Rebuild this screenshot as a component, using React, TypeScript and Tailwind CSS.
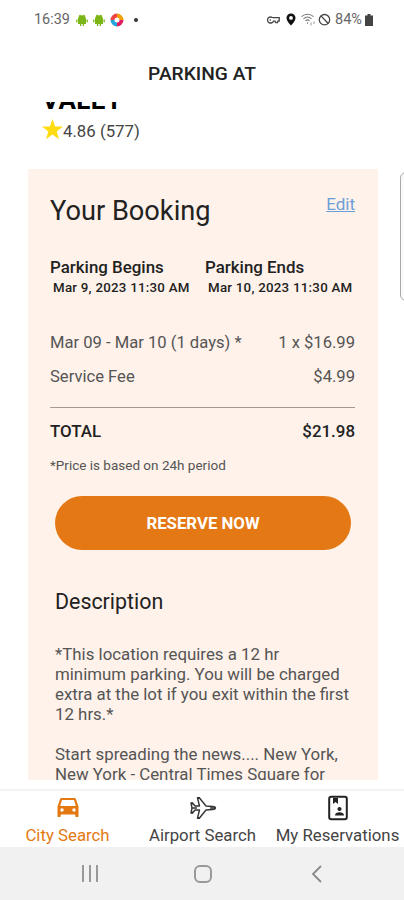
import React, { useState } from "react";

type Tab = "city" | "airport" | "reservations";

const AndroidIcon: React.FC = () => (
  <svg width="12" height="13" viewBox="0 0 12 13" fill="#7cb518">
    <path d="M2 5.2a4 4 0 0 1 8 0zM2 5.2h8V10H2z" />
    <path d="M3.5 1l1 1.4M8.5 1l-1 1.4M.8 5.5v2.7M11.2 5.5v2.7M4.6 10v2M7.4 10v2" stroke="#7cb518" strokeWidth="1.3" />
  </svg>
);

const SwirlIcon: React.FC = () => (
  <svg width="14" height="14" viewBox="0 0 14 14" fill="none" strokeWidth="4">
    <path d="M7 2.5A4.5 4.5 0 0 1 11.5 7" stroke="#f59e0b" />
    <path d="M11.5 7A4.5 4.5 0 0 1 7 11.5" stroke="#e11d62" />
    <path d="M7 11.5A4.5 4.5 0 0 1 2.5 7" stroke="#22a7dc" />
    <path d="M2.5 7A4.5 4.5 0 0 1 7 2.5" stroke="#ef4444" />
  </svg>
);

const StatusIcons: React.FC = () => (
  <svg width="67" height="16" viewBox="0 0 67 16" fill="none" stroke="#444">
    <path d="M6 5.4a3 3 0 1 0 0 5.2c.8-.4 1.2-1 1.5-1.4h1.5l.8 1.5h1.6l.5-1.5h1.3V5.7H7.5A3 3 0 0 0 6 5.4z" strokeWidth="1.3" />
    <circle cx="4.3" cy="8" r=".8" fill="#444" stroke="none" />
    <path d="M25 1.5A4.5 4.5 0 0 0 20.500 6C20.500 9 25 13.500 25 13.500S29.500 9 29.500 6A4.500 4.500 0 0 0 25 1.500zm0 2.500a1.900 1.900 0 1 1 0 3.800 1.900 1.900 0 0 1 0-3.800z" fill="#111" stroke="none" />
    <path d="M35.5 4.700c3.500-3.200 8.500-3.200 12 0M37.500 6.800c2.500-2.200 5.500-2.200 8 0M39.500 8.700c1.300-1 2.700-1 4 0" stroke="#777" strokeWidth="1.1" />
    <path d="M41.5 10v2M45 10.500v3M48 9.500v2.500" stroke="#999" />
    <circle cx="58.5" cy="7.700" r="5.200" strokeWidth="1.3" />
    <path d="M55 3.900l7.200 7.600" strokeWidth="1.3" />
  </svg>
);

const CarIcon: React.FC = () => (
  <svg width="24" height="22" viewBox="0 0 24 22" fill="#e47911">
    <path
      fillRule="evenodd"
      d="M5.5 1h13c.7 0 1.2.4 1.4 1L22.5 9.5V19c0 .6-.4 1-1 1h-1.2c-.6 0-1-.4-1-1v-1.5H4.7V19c0 .6-.4 1-1 1H2.5c-.6 0-1-.4-1-1V9.5L4.1 2c.2-.6.7-1 1.4-1zM6 3L4.2 9h15.6L18 3zM6 11.3a1.7 1.7 0 1 0 0 3.4 1.7 1.7 0 0 0 0-3.4zm12 0a1.7 1.7 0 1 0 0 3.4 1.7 1.7 0 0 0 0-3.4z"
    />
  </svg>
);

const PlaneIcon: React.FC = () => (
  <svg width="28" height="26" viewBox="0 0 28 26" fill="none" stroke="#333" strokeWidth="1.4" strokeLinejoin="round">
    <path d="M10.5 11L8.5 3h2l6.500 8 6.500.5c1.500.1 3 .6 3 1.500s-1.500 1.400-3 1.500L17 15l-6.500 8h-2l2-8H6l-2.500 3H2l1-5-1-5h1.500L6 11z" />
    <path d="M3 13h5M21 13h5" />
    <path d="M8 3h3M8 23h3M2 8.5h2M2 17.5h2" strokeWidth="2.2" />
  </svg>
);

const ReservationIcon: React.FC = () => (
  <svg width="20" height="26" viewBox="0 0 20 26">
    <rect x="1.2" y="1.8" width="17.6" height="22.4" rx="2" fill="none" stroke="#222" strokeWidth="2" />
    <path d="M5 3v6l2.5-2L10 9V3z" fill="#222" />
    <circle cx="11.5" cy="14" r="2.1" fill="#222" />
    <path d="M7 20.5c0-2.500 2-3.200 4.500-3.200s4.500.7 4.500 3.200z" fill="#222" />
  </svg>
);

const StatusBar: React.FC = () => (
  <div className="h-10 pl-[34px] pr-[31px] flex items-center text-sm text-[#666]">
    <span className="w-9 whitespace-nowrap text-[14.4px]">16:39</span>
    <div className="ml-1.5 flex items-center gap-[5px]">
      <AndroidIcon />
      <AndroidIcon />
      <SwirlIcon />
    </div>
    <span className="ml-2.5 size-1 rounded-full bg-[#333]" />
    <div className="ml-auto flex items-center">
      <StatusIcons />
      <span className="ml-0.5 w-[30px] whitespace-nowrap text-[14.5px]">84%</span>
      <svg width="8" height="14" viewBox="0 0 8 14" fill="#444">
        <path d="M2.5 1h3v1.5H8V13H0V2.5h2.5z" />
      </svg>
    </div>
  </div>
);

const PriceRow: React.FC<{ label: string; price: string }> = ({ label, price }) => (
  <div className="flex justify-between h-[34px] text-[16.6px] leading-[25px] text-[#555]">
    <span>{label}</span>
    <span>{price}</span>
  </div>
);

const tabs: { id: Tab; label: string; icon: React.ReactNode }[] = [
  { id: "city", label: "City Search", icon: <CarIcon /> },
  { id: "airport", label: "Airport Search", icon: <PlaneIcon /> },
  { id: "reservations", label: "My Reservations", icon: <ReservationIcon /> },
];

const App: React.FC = () => {
  const [activeTab, setActiveTab] = useState<Tab>("city");

  return (
    <div className="h-[900px] w-[404px] bg-white flex flex-col overflow-hidden font-['Roboto',sans-serif] text-[#222]">
      <StatusBar />
      <div className="h-[62px] pt-[21px] text-center text-[19.2px] leading-[26px] font-medium">PARKING AT</div>

      <div className="relative h-[678px] overflow-hidden">
        <div className="h-[67px] pl-[42px]">
          <div className="h-[9px] overflow-hidden flex items-end">
            <span className="text-[26px] leading-[30px] -mb-[4px] font-bold text-black tracking-[0.4px]">VALET</span>
          </div>
          <div className="mt-[7px] flex items-center h-[23px] text-[#444]">
            <svg width="21" height="21" viewBox="0 0 24 24" fill="#ffdc12">
              <path d="M12 0l3 8.5 9 .2-7.2 5.5L19.5 23 12 17.8 4.5 23l2.7-8.8L0 8.7l9-.2z" />
            </svg>
            <span className="pt-1 text-[16.8px]">4.86 (577)</span>
          </div>
        </div>

        <div className="ml-7 w-[350px] h-[611px] bg-[#fff2ea] pl-[22px] pr-[23px] overflow-hidden">
          <div className="flex justify-between h-[86px] pt-6">
            <h1 className="text-[27.2px] leading-9">Your Booking</h1>
            <a href="#" className="text-[17px] leading-[22px] text-[#6c9fd9] underline">
              Edit
            </a>
          </div>

          <div className="flex h-[75px] font-medium">
            <div className="w-[155px] whitespace-nowrap">
              <div className="text-[16.9px] leading-6">Parking Begins</div>
              <div className="pl-[3px] pt-px text-[13.3px] leading-4 tracking-[0.25px]">Mar 9, 2023 11:30 AM</div>
            </div>
            <div className="whitespace-nowrap">
              <div className="text-[16.9px] leading-6">Parking Ends</div>
              <div className="pl-[3px] pt-px text-[13.3px] leading-4 tracking-[0.25px]">Mar 10, 2023 11:30 AM</div>
            </div>
          </div>

          <PriceRow label="Mar 09 - Mar 10 (1 days) *" price="1 x $16.99" />
          <PriceRow label="Service Fee" price="$4.99" />
          <div className="mt-[9px] border-t border-[#a19a95]" />
          <div className="pt-[11px] flex justify-between text-[16.9px] leading-6 font-medium">
            <span>TOTAL</span>
            <span>$21.98</span>
          </div>
          <div className="mt-3 h-[41px] text-[13.5px] leading-5 text-[#555]">*Price is based on 24h period</div>

          <div className="pl-[5px] pr-1">
            <button className="w-full h-[54px] pt-px rounded-full bg-[#e47814] text-white text-[16.8px] font-bold">
              RESERVE NOW
            </button>
            <h2 className="mt-[37px] text-[21.4px] leading-[30px]">Description</h2>
            <div className="mt-[27px] text-[16.85px] leading-5 text-[#555] whitespace-nowrap">
              <p>
                *This location requires a 12 hr
                <br />
                minimum parking. You will be charged
                <br />
                extra at the lot if you exit within the first
                <br />
                12 hrs.*
              </p>
              <p className="mt-5">
                Start spreading the news.... New York,
                <br />
                New York - Central Times Square for
              </p>
            </div>
          </div>
        </div>

        <div className="absolute right-[-8px] top-[70px] w-3 h-[129px] rounded-md border border-[#aaa] bg-[#fafafa]" />
      </div>

      <div className="mt-[9px] h-[58px] border-t-2 border-[#f4f4f4] flex">
        {tabs.map((tab) => (
          <button
            key={tab.id}
            onClick={() => setActiveTab(tab.id)}
            className={
              "flex flex-col items-center w-[135px] shrink-0 text-[16.8px] leading-5 whitespace-nowrap " +
              (activeTab === tab.id ? "text-[#e47911]" : "text-[#444]")
            }
          >
            <span className="h-[33px] flex items-center">{tab.icon}</span>
            <span className="pt-px">{tab.label}</span>
          </button>
        ))}
      </div>

      <div className="h-[53px] bg-[#f1f1f1] flex items-center justify-between pl-[82px] pr-[82px]">
        <div className="flex gap-[5px]">
          <span className="w-0.5 h-[17px] bg-[#999]" />
          <span className="w-0.5 h-[17px] bg-[#999]" />
          <span className="w-0.5 h-[17px] bg-[#999]" />
        </div>
        <span className="-ml-1 size-[18px] rounded-md border-2 border-[#999]" />
        <svg width="10" height="18" viewBox="0 0 10 18" fill="none" stroke="#888" strokeWidth="1.8">
          <path d="M9 1L1 9l8 8" />
        </svg>
      </div>
    </div>
  );
};

export default App;
